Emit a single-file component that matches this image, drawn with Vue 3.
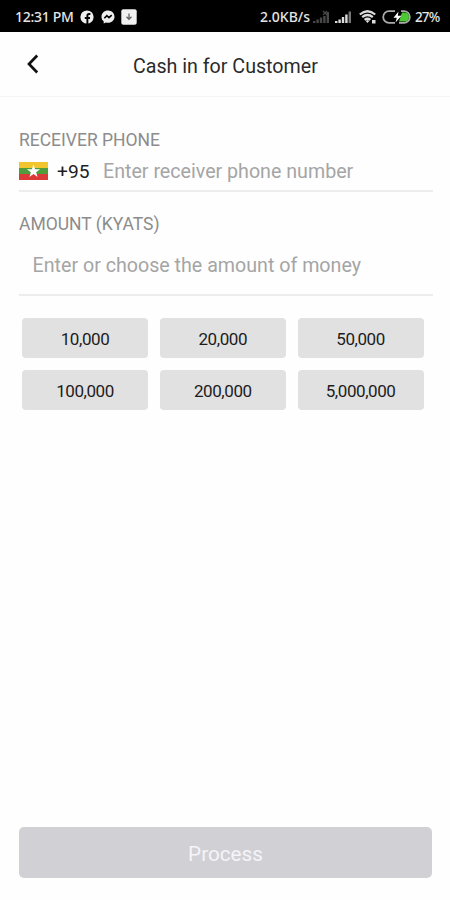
<script setup>
const amounts = ['10,000', '20,000', '50,000', '100,000', '200,000', '5,000,000']
</script>

<template>
  <div class="screen">
    <div class="status">
      <span class="time">12:31 PM</span>
      <svg class="fb" width="14" height="14" viewBox="0 0 14 14">
        <circle cx="7" cy="7" r="6.6" fill="#eee" />
        <path d="M7.4 14V5.6Q7.4 4 9 4H10.4M4.8 8H10" fill="none" stroke="#000" stroke-width="1.9" />
      </svg>
      <svg class="msg" width="14" height="14" viewBox="0 0 14 14">
        <path d="M7 .6C3.2.6.5 3.3.5 6.7c0 2 .9 3.5 2.2 4.6V13.5l2.2-1.100c.7.2 1.4.3 2.1.3 3.8 0 6.5-2.700 6.500-6S10.800.6 7 .6Z" fill="#eee" />
        <path d="M3.300 8.300 5.900 5.600 8 7.700 10.700 5.200" fill="none" stroke="#000" stroke-width="1.6" />
      </svg>
      <svg class="down" width="16" height="16" viewBox="0 0 16 16">
        <rect x=".3" y=".3" width="15.4" height="15.4" rx="2" fill="#f1f1f1" />
        <path d="M8 4.500v5.500M5.500 7.800 8 10.300l2.500-2.500" fill="none" stroke="#666" stroke-width="1.300" />
      </svg>
      <span class="rate">2.0KB/s</span>
      <svg class="sig1" width="17" height="14" viewBox="0 0 17 14" fill="#484848">
        <path d="M0 11h2.400v2H0zM3.400 9.500h2.400V13H3.400zM6.800 7.500h2.400V13H6.800zM10.200 6h2.400v7h-2.400zM13.600 2H16v11h-2.400z" />
        <path d="m10 1 4 4m0-4-4 4" stroke="#484848" stroke-width="1.200" />
      </svg>
      <svg class="sig2" width="17" height="14" viewBox="0 0 17 14" fill="#ddd">
        <path d="M0 11h2.400v2H0zM3.400 9.500h2.400V13H3.400zM6.800 7h2.400v6H6.800zM10.200 4.500h2.400V13h-2.400z" />
        <path d="M13.600 1.500H16V13h-2.400z" fill="#777" />
      </svg>
      <svg class="wifi" width="18" height="14" viewBox="0 0 18 14">
        <g fill="none" stroke="#ddd" stroke-width="2.200">
          <path d="M.8 4.500Q8.500-2 16.200 4.500" />
          <path d="M3.200 7.200q5.300-4.400 10.600 0" />
          <path d="M5.600 9.900q2.900-2.300 5.800 0" />
        </g>
        <path d="m6.700 11 1.800-1 1.800 1-1.800 2zM13 10h3.500v3.500H13z" fill="#ddd" />
      </svg>
      <svg class="battery" width="29" height="14" viewBox="0 0 29 14">
        <path d="M13 1.200H7a5.800 5.800 0 0 0 0 11.600h6M19 1.200h3a5.800 5.800 0 0 1 0 11.600h-5" fill="none" stroke="#aaa" stroke-width="1.800" />
        <path d="M20 2.500h2.500A4.500 4.500 0 0 1 22.500 11.500H17z" fill="#4cc832" />
        <path d="m16.500 1.500-5 6.300h3.300L13.500 12.500l6-6.800h-3.700z" fill="#fff" />
      </svg>
      <span class="percent">27%</span>
    </div>

    <header class="header">
      <svg class="back" width="14" height="22" viewBox="0 0 14 22">
        <path d="M11.200 2.500 3 11l8.200 8.500" fill="none" stroke="#111" stroke-width="2.700" />
      </svg>
      <h1>Cash in for Customer</h1>
    </header>

    <main class="form">
      <div class="label">RECEIVER PHONE</div>
      <div class="phone">
        <svg class="flag" width="29" height="18" viewBox="0 0 29 18">
          <path d="M0 0h29v6H0z" fill="#f0c52d" />
          <path d="M0 6h29v6H0z" fill="#4f9d3b" />
          <path d="M0 12h29v6H0z" fill="#dc3a38" />
          <path d="m14.500 2.500 1.600 4.700h5l-4 3 1.500 4.800-4.100-2.900-4.100 2.900 1.500-4.800-4-3h5z" fill="#fff" />
        </svg>
        <span class="code">+95</span>
        <span class="hint phone-hint">Enter receiver phone number</span>
      </div>
      <div class="label second">AMOUNT (KYATS)</div>
      <div class="amount"><span class="hint amount-hint">Enter or choose the amount of money</span></div>
      <div class="choices">
        <button v-for="a in amounts" :key="a" class="choice">{{ a }}</button>
      </div>
    </main>

    <footer class="footer"><button class="process">Process</button></footer>
  </div>
</template>

<style>
body {
  background: #fefefe;
}
</style>

<style scoped>
.screen {
  display: flex;
  flex-direction: column;
  height: 900px;
  box-sizing: border-box;
  background: #fefefe;
  font-family: Roboto, "Liberation Sans", sans-serif;
  white-space: nowrap;
  overflow: hidden;
}
.status {
  display: flex;
  align-items: center;
  height: 32px;
  box-sizing: border-box;
  padding: 1px 0 0 15px;
  background: #000;
  color: #e4e4e4;
  font: 500 14px/30px "Noto Sans", sans-serif;
}
.status svg {
  flex: none;
}
.time {
  width: 65px;
  letter-spacing: -0.3px;
}
.msg {
  margin-left: 7px;
}
.down {
  margin-left: 6px;
}
.rate {
  width: 53px;
  margin-left: 123px;
}
.sig2 {
  margin-left: 5px;
}
.wifi {
  margin-left: 7px;
}
.battery {
  margin-left: 5px;
}
.percent {
  margin-left: 4px;
  font-size: 13.5px;
  letter-spacing: -0.9px;
}
.header {
  display: grid;
  grid-template-columns: 107px 1fr;
  align-items: center;
  height: 65px;
  box-sizing: border-box;
  padding: 0 0 0 26px;
  border-bottom: 1px solid #f5f5f5;
}
h1 {
  margin: 5px 0 0;
  color: #2b2b2b;
  font-size: 19.65px;
  font-weight: 400;
  line-height: 24px;
}
.form {
  padding: 32px 17px 0 19px;
}
.label {
  color: #8c8c8c;
  font-size: 17.5px;
  line-height: 22px;
}
.phone {
  display: flex;
  align-items: center;
  height: 41px;
  box-sizing: border-box;
  padding-top: 1px;
  border-bottom: 2px solid #ededed;
}
.code {
  width: 46px;
  margin-left: 9px;
  color: #1e1e1e;
  font-size: 19.2px;
}
.hint {
  color: #a5a5a5;
  font-size: 19.65px;
}
.second {
  margin-top: 21px;
}
.amount {
  display: flex;
  align-items: center;
  height: 61px;
  box-sizing: border-box;
  padding: 2px 0 0 13.6px;
  border-bottom: 2px solid #ededed;
}
.choices {
  display: grid;
  grid-template-columns: repeat(3, 126px);
  grid-auto-rows: 40px;
  gap: 12px 11.8px;
  padding: 22px 0 0 3px;
}
button {
  padding: 0;
  border: 0;
  font-family: inherit;
}
.choice {
  padding-top: 1px;
  border-radius: 4px;
  background: #e1e1e1;
  color: #1c1c1c;
  font-size: 17px;
  letter-spacing: -0.42px;
}
.footer {
  margin-top: auto;
  padding: 0 18px 22px 19px;
}
.process {
  display: block;
  width: 100%;
  height: 51px;
  padding-top: 2px;
  border-radius: 5px;
  background: #d1d0d5;
  color: #f5f4f8;
  font-size: 20.7px;
}
</style>
